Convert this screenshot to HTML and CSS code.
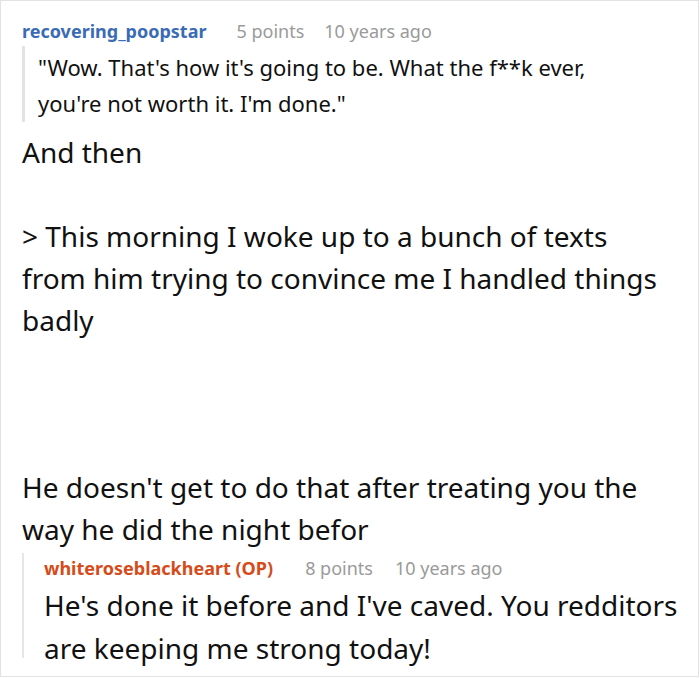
FILE: index.html
```html
<!DOCTYPE html>
<html>
<head>
<meta charset="utf-8">
<link rel="stylesheet" href="styles.css">
</head>
<body>
<div class="card">
  <div class="comment">
    <div class="meta"><span class="author">recovering_poopstar</span><span class="info">5 points</span><span class="info">10 years ago</span></div>
    <blockquote class="quote">"Wow. That's how it's going to be. What the f**k ever, you're not worth it. I'm done."</blockquote>
    <div class="body">
      <p>And then</p>
      <p>&gt; This morning I woke up to a bunch of texts from him trying to convince me I handled things badly</p>
      <p class="spacer"></p>
      <p>He doesn't get to do that after treating you the way he did the night befor</p>
    </div>
    <div class="reply">
      <div class="meta"><span class="author op">whiteroseblackheart (OP)</span><span class="info">8 points</span><span class="info">10 years ago</span></div>
      <div class="body"><p>He's done it before and I've caved. You redditors are keeping me strong today!</p></div>
    </div>
  </div>
</div>
</body>
</html>
```
FILE: styles.css
```css
html, body { margin: 0; padding: 0; background: #fff; }
body { font-family: "Noto Sans", "Open Sans", sans-serif; color: #111; }
.card {
  width: 699px; height: 677px; box-sizing: border-box;
  border: 1px solid #e2e2e2; overflow: hidden;
  padding: 18px 20px 0 21px;
}
.meta { font-size: 18px; line-height: 24px; display: flex; }
.author { font-weight: 700; color: #3a6bb5; margin-right: 30px; }
.author.op { color: #d54c1a; }
.info { color: #9a9a9a; margin-right: 20px; }
.reply .author { margin-right: 32px; }
.reply .info { margin-right: 22px; }
.quote {
  margin: 3px 0 0 0; padding: 3px 0 1px 13px;
  border-left: 3px solid #e3e3e3;
  font-size: 22px; line-height: 36px; width: 570px;
}
.body { font-size: 28px; line-height: 42px; }
.comment > .body { margin-top: 9px; }
.body p { margin: 0 0 42px 0; }
.body p:last-child { margin-bottom: 0; }
.spacer { height: 41px; }
.reply {
  margin-top: 3px; border-left: 2px solid #e6e6e6;
  padding-left: 20px; padding-top: 3px;
  height: 102px;
}
.reply .body { padding-top: 4px; line-height: 42.5px; }
```
